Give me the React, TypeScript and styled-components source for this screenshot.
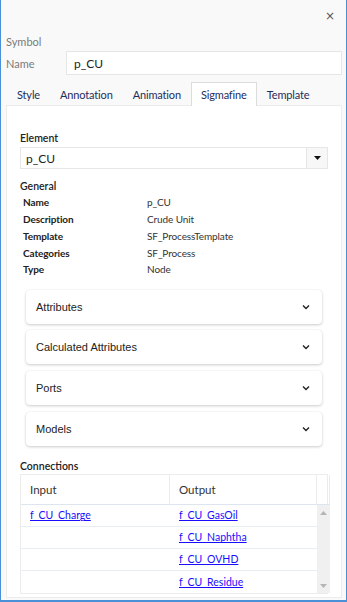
import styled, { createGlobalStyle } from "styled-components";

const GlobalStyle = createGlobalStyle`
  html, body {
    margin: 0;
    padding: 0;
    background: #ffffff;
  }
  * {
    box-sizing: border-box;
  }
`;

const Window = styled.div`
  width: 347px;
  height: 602px;
  background: #f9f9f9;
  border: 1px solid #4a90d9;
  border-top: none;
  border-bottom: 2px solid #4a90d9;
  font-family: Lato, "Open Sans", sans-serif;
  display: flex;
  flex-direction: column;
  overflow: hidden;
`;

const TitleBar = styled.div`
  height: 33px;
  display: flex;
  justify-content: flex-end;
  align-items: center;
  padding: 0 11px 1px 0;
`;

const CloseButton = styled.span`
  font-size: 12px;
  color: #555;
  line-height: 1;
  font-family: "DejaVu Sans", sans-serif;
`;

const SymbolLabel = styled.div`
  font-size: 11px;
  color: #7a7a7a;
  padding: 2px 0 0 5px;
  height: 18px;
`;

const NameRow = styled.div`
  display: flex;
  align-items: center;
  padding: 0 4px 0 5px;
  height: 24px;
`;

const NameLabel = styled.span`
  width: 60px;
  font-size: 11px;
  color: #7a7a7a;
`;

const TextBox = styled.div`
  flex: 1;
  height: 24px;
  background: #fff;
  border: 1px solid #e6e6e6;
  display: flex;
  align-items: center;
  padding-left: 7px;
  font-size: 12px;
  color: #222;
`;

const Tabs = styled.div`
  display: flex;
  align-items: flex-end;
  height: 30px;
  padding: 6px 0 0 6px;
`;

const Tab = styled.div<{ $active?: boolean }>`
  height: 24px;
  padding: 0 9px;
  display: flex;
  align-items: center;
  font-size: 11px;
  letter-spacing: -0.15px;
  color: #1f2d5c;
  background: ${(p) => (p.$active ? "#fff" : "transparent")};
  border: 1px solid ${(p) => (p.$active ? "#dcdcdc" : "transparent")};
  border-bottom: none;
  margin-bottom: -1px;
  position: relative;
  z-index: 1;
`;

const Panel = styled.div`
  flex: 1;
  margin: 0 4px 2px 5px;
  background: #fff;
  border: 1px solid #ececec;
  padding: 26px 13px 0 13px;
`;

const SectionLabel = styled.div`
  font-size: 10.5px;
  color: #222;
  font-weight: 600;
  margin-bottom: 3px;
`;

const Select = styled.div`
  height: 22px;
  border: 1px solid #e6e6e6;
  display: flex;
  align-items: stretch;
  margin-bottom: 11px;
`;

const SelectValue = styled.div`
  flex: 1;
  display: flex;
  align-items: center;
  padding-left: 5px;
  font-size: 12px;
  color: #222;
`;

const SelectButton = styled.div`
  width: 21px;
  border-left: 1px solid #e6e6e6;
  background: #f7f7f7;
  display: flex;
  align-items: center;
  justify-content: center;
`;

const PropGrid = styled.div`
  display: grid;
  grid-template-columns: 124px 1fr;
  grid-template-rows: repeat(5, 16.75px);
  padding-left: 3px;
  margin-top: -1px;
  align-items: center;
  font-size: 10px;
  letter-spacing: -0.1px;
`;

const PropName = styled.span`
  font-weight: 700;
  color: #222;
`;

const PropValue = styled.span`
  color: #333;
`;

const AccordionList = styled.div`
  display: flex;
  flex-direction: column;
  gap: 6.7px;
  padding: 12px 6px 0 6px;
`;

const AccordionItem = styled.div`
  height: 34px;
  background: #fff;
  border-radius: 4px;
  box-shadow: 0 1px 3px rgba(0, 0, 0, 0.2), 0 0 1px rgba(0, 0, 0, 0.08);
  display: flex;
  align-items: center;
  justify-content: space-between;
  padding: 0 11px 0 10px;
  font-family: "Liberation Sans", Arial, sans-serif;
  font-size: 11px;
  color: #222;
`;

const Connections = styled.div`
  margin-top: 14px;
`;

const Table = styled.div`
  border: 1px solid #ececec;
  display: grid;
  grid-template-columns: 149px 147px 13px;
  grid-template-rows: 30px repeat(4, 22px);
  margin-top: -1px;
`;

const HeadCell = styled.div`
  display: flex;
  align-items: center;
  padding-left: 9px;
  font-size: 11.5px;
  color: #333;
  border-right: 1px solid #ececec;
  border-bottom: 1px solid #dde6ee;
`;

const Cell = styled.div<{ $lastRow?: boolean }>`
  display: flex;
  align-items: center;
  padding-left: 9px;
  border-bottom: ${(p) => (p.$lastRow ? "none" : "1px solid #e6edf3")};
`;

const Link = styled.a`
  font-size: 10.5px;
  color: #1a0dff;
  text-decoration: underline;
  cursor: pointer;
`;

const Scrollbar = styled.div`
  grid-column: 3;
  grid-row: 2 / span 4;
  background: #f0f0f0;
  display: flex;
  flex-direction: column;
  justify-content: space-between;
  align-items: center;
  padding: 6px 0 5px;
`;

const Chevron = () => (
  <svg width="10" height="10" viewBox="0 0 10 10">
    <path d="M2 3.5 L5 6.5 L8 3.5" fill="none" stroke="#222" strokeWidth="1.4" />
  </svg>
);

const Caret = ({ up, color }: { up?: boolean; color: string }) => (
  <svg width="7" height="4" viewBox="0 0 7 4">
    <path d={up ? "M0 4 L3.5 0 L7 4 Z" : "M0 0 L7 0 L3.5 4 Z"} fill={color} />
  </svg>
);

const general = [
  ["Name", "p_CU"],
  ["Description", "Crude Unit"],
  ["Template", "SF_ProcessTemplate"],
  ["Categories", "SF_Process"],
  ["Type", "Node"],
];

const sections = ["Attributes", "Calculated Attributes", "Ports", "Models"];

const rows = [
  ["f_CU_Charge", "f_CU_GasOil"],
  ["", "f_CU_Naphtha"],
  ["", "f_CU_OVHD"],
  ["", "f_CU_Residue"],
];

export default function App() {
  return (
    <>
      <GlobalStyle />
      <Window>
        <TitleBar>
          <CloseButton>×</CloseButton>
        </TitleBar>
        <SymbolLabel>Symbol</SymbolLabel>
        <NameRow>
          <NameLabel>Name</NameLabel>
          <TextBox>p_CU</TextBox>
        </NameRow>
        <Tabs>
          <Tab>Style</Tab>
          <Tab>Annotation</Tab>
          <Tab>Animation</Tab>
          <Tab $active>Sigmafine</Tab>
          <Tab>Template</Tab>
        </Tabs>
        <Panel>
          <SectionLabel>Element</SectionLabel>
          <Select>
            <SelectValue>p_CU</SelectValue>
            <SelectButton>
              <Caret color="#111" />
            </SelectButton>
          </Select>
          <SectionLabel>General</SectionLabel>
          <PropGrid>
            {general.map(([k, v]) => [
              <PropName key={k}>{k}</PropName>,
              <PropValue key={k + "v"}>{v}</PropValue>,
            ])}
          </PropGrid>
          <AccordionList>
            {sections.map((s) => (
              <AccordionItem key={s}>
                {s}
                <Chevron />
              </AccordionItem>
            ))}
          </AccordionList>
          <Connections>
            <SectionLabel>Connections</SectionLabel>
            <Table>
              <HeadCell>Input</HeadCell>
              <HeadCell>Output</HeadCell>
              <HeadCell />
              {rows.map(([a, b], i) => [
                <Cell key={"a" + i} $lastRow={i === rows.length - 1}>
                  {a && <Link>{a}</Link>}
                </Cell>,
                <Cell key={"b" + i} $lastRow={i === rows.length - 1}>
                  <Link>{b}</Link>
                </Cell>,
              ])}
              <Scrollbar>
                <Caret up color="#b5b5b5" />
                <Caret color="#b5b5b5" />
              </Scrollbar>
            </Table>
          </Connections>
        </Panel>
      </Window>
    </>
  );
}
